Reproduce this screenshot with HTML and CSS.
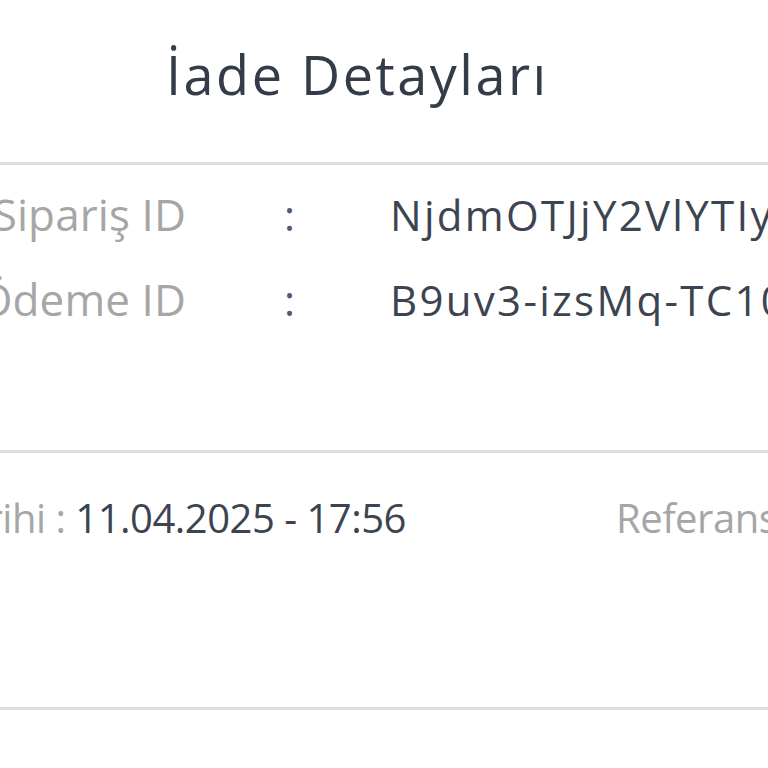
FILE: index.html
```html
<!DOCTYPE html>
<html lang="tr">
<head>
<meta charset="utf-8">
<title>İade Detayları</title>
<link rel="stylesheet" href="styles.css">
</head>
<body>
<div class="sheet">
  <header class="header">
    <h1 class="title">İade Detayları</h1>
  </header>
  <section class="ids">
    <div class="id-row">
      <span class="label">Sipariş ID</span>
      <span class="colon">:</span>
      <span class="value">NjdmOTJjY2VlYTIyZmE4</span>
    </div>
    <div class="id-row">
      <span class="label">Ödeme ID</span>
      <span class="colon">:</span>
      <span class="value">B9uv3-izsMq-TC10</span>
    </div>
  </section>
  <section class="meta">
    <div class="meta-item meta-date">
      <span class="meta-label">İade Tarihi :</span>
      <span class="meta-value">11.04.2025 - 17:56</span>
    </div>
    <div class="meta-item">
      <span class="meta-label">Referans No :</span>
    </div>
  </section>
  <div class="footer"></div>
</div>
</body>
</html>
```

FILE: styles.css
```css
html, body {
  margin: 0;
  padding: 0;
  background: #ffffff;
  overflow: hidden;
}

body {
  font-family: "Open Sans", "Liberation Sans", sans-serif;
  width: 768px;
  height: 768px;
}

.sheet {
  width: 768px;
  display: flex;
  flex-direction: column;
}

.header {
  height: 165px;
  box-sizing: border-box;
  border-bottom: 3px solid #dedede;
  display: flex;
  align-items: flex-start;
  padding-left: 166px;
}

.title {
  margin: 0;
  margin-top: 36px;
  font-size: 54px;
  font-weight: 400;
  letter-spacing: 2.5px;
  color: #353c49;
  line-height: 76px;
  white-space: nowrap;
}

.ids {
  height: 288px;
  box-sizing: border-box;
  border-bottom: 3px solid #dedede;
  padding-top: 7px;
  display: flex;
  flex-direction: column;
}

.id-row {
  display: grid;
  grid-template-columns: 186px 204px 1fr;
  height: 85px;
  line-height: 85px;
  align-items: baseline;
  white-space: nowrap;
}

.label {
  min-width: 0;
  display: flex;
  justify-content: flex-end;
  font-size: 44px;
  letter-spacing: 0.1px;
  color: #a6a6a6;
}

.colon {
  padding-left: 98px;
  font-size: 42px;
  color: #555b66;
}

.value {
  font-size: 42px;
  letter-spacing: 2.3px;
  color: #3d4451;
}

.meta {
  height: 257px;
  box-sizing: border-box;
  border-bottom: 3px solid #dedede;
  display: flex;
  align-items: baseline;
  padding-top: 35px;
  gap: 210px;
  white-space: nowrap;
  font-size: 40px;
  line-height: 60px;
  letter-spacing: -0.5px;
  margin-left: -145px;
}

.meta-label {
  color: #a6a6a6;
}

.meta-value {
  color: #3d4451;
}
```
